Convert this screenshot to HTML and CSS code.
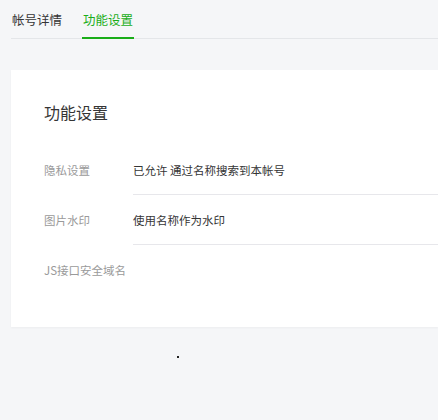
FILE: index.html
```html
<!DOCTYPE html>
<html lang="zh-CN">
<head>
<meta charset="utf-8">
<link rel="stylesheet" href="styles.css">
</head>
<body>
<div class="page">
  <nav class="tabs">
    <a class="tab">帐号详情</a>
    <a class="tab active">功能设置</a>
  </nav>
  <section class="card">
    <h2 class="title">功能设置</h2>
    <div class="row">
      <div class="label">隐私设置</div>
      <div class="value">已允许 通过名称搜索到本帐号</div>
    </div>
    <div class="row">
      <div class="label">图片水印</div>
      <div class="value">使用名称作为水印</div>
    </div>
    <div class="row last">
      <div class="label">JS接口安全域名</div>
      <div class="value"></div>
    </div>
  </section>
  <span class="dot"></span>
</div>
</body>
</html>
```

FILE: styles.css
```css
html, body {
  margin: 0;
  padding: 0;
  background: #f5f6f8;
  font-family: "Noto Sans CJK SC", "Noto Sans", sans-serif;
  color: #353535;
}
.page {
  position: relative;
  width: 438px;
  height: 420px;
  overflow: hidden;
  padding-left: 11px;
  box-sizing: border-box;
}
.tabs {
  display: flex;
  gap: 19px;
  padding-top: 10px;
  border-bottom: 1px solid #e4e6e9;
}
.tab {
  font-size: 12.5px;
  line-height: 20px;
  padding: 0 1px 7px;
  border-bottom: 2px solid transparent;
  margin-bottom: -1px;
  color: #353535;
}
.tab.active {
  color: #1aad19;
  border-bottom-color: #1aad19;
}
.card {
  margin-top: 31px;
  background: #fff;
  padding: 30px 0 32px 33px;
  box-shadow: 0 1px 2px rgba(0, 0, 0, 0.04);
}
.title {
  margin: 0 0 21px;
  font-size: 16px;
  font-weight: normal;
  line-height: 24px;
  color: #353535;
}
.row {
  display: flex;
  align-items: center;
  height: 50px;
}
.label {
  width: 89px;
  flex: none;
  font-size: 11.5px;
  color: #9a9a9a;
}
.value {
  flex: 1;
  align-self: stretch;
  display: flex;
  align-items: center;
  font-size: 11.5px;
  color: #353535;
  border-bottom: 1px solid #e7e7eb;
}
.row.last .value {
  border-bottom: none;
}
.dot {
  position: absolute;
  left: 177px;
  top: 356px;
  width: 2px;
  height: 2px;
  background: #222;
}
```
